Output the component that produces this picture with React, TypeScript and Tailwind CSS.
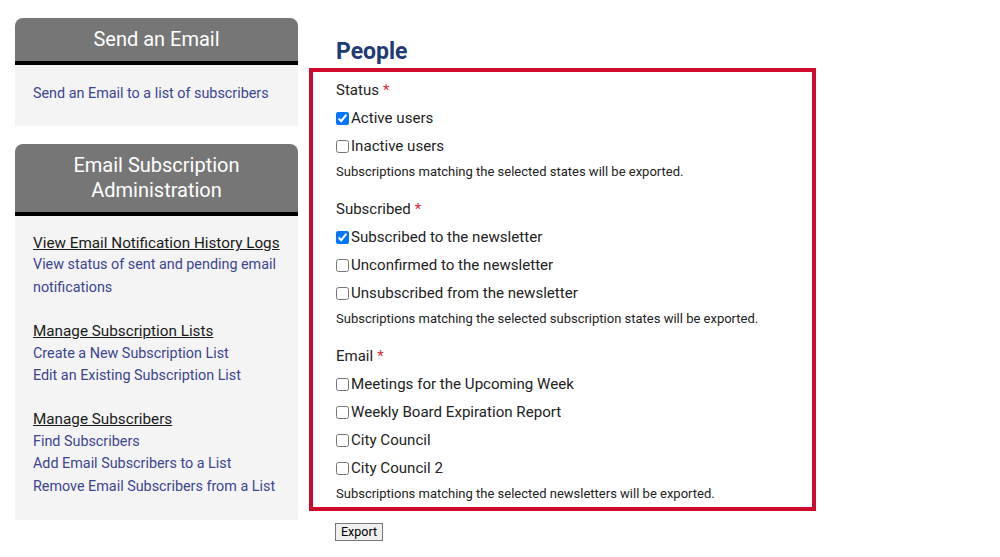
import React from 'react';

const linkBlue = 'text-[#3b4590]';

const SideCard = ({ title, children, className = '' }: { title: React.ReactNode; children: React.ReactNode; className?: string }) => (
  <div className={`w-[283px] ${className}`}>
    <div className="rounded-t-[8px] border-b-4 border-black bg-[#767676] text-center text-[20px] leading-[25px] text-white">
      {title}
    </div>
    <div className="bg-[#f4f4f4] px-[18px]">{children}</div>
  </div>
);

const Check = ({ label, checked = false }: { label: string; checked?: boolean }) => (
  <label className="flex h-[28px] items-center text-[15.1px] text-[#222]">
    <input type="checkbox" defaultChecked={checked} className="m-0 mr-[2px] h-[13px] w-[13px] accent-[#0075ff]" />
    {label}
  </label>
);

const Group = ({ title, items, help, last = false }: { title: string; items: [string, boolean][]; help: string; last?: boolean }) => (
  <div className={last ? '' : 'mb-[11px]'}>
    <div className="flex h-[28px] items-center text-[15px] text-[#222]">
      {title}
      <span className="ml-[4px] text-[#e0283c]">*</span>
    </div>
    {items.map(([l, c]) => (
      <Check key={l} label={l} checked={c} />
    ))}
    <div className="flex h-[24px] items-center text-[13px] text-[#222]">{help}</div>
  </div>
);

export default function App() {
  return (
    <div className="flex min-h-[557px] bg-white pl-[15px] pt-[18px] font-['Roboto',sans-serif]">
      <div className="flex flex-col gap-[18px]">
        <SideCard title={<div className="flex h-[43px] items-center justify-center">Send an Email</div>}>
          <div className={`pb-[21px] pt-[18px] text-[14.35px] leading-[22px] ${linkBlue}`}>Send an Email to a list of subscribers</div>
        </SideCard>
        <SideCard
          title={
            <div className="py-[9px]">
              Email Subscription
              <br />
              Administration
            </div>
          }
        >
          <div className="pb-[22px] pt-[16px] text-[14.35px] leading-[22.4px]">
            <div className="mb-[21px]">
              <div className="text-[15.25px] text-[#1a1a1a] underline">View Email Notification History Logs</div>
              <div className={linkBlue}>View status of sent and pending email notifications</div>
            </div>
            <div className="mb-[21px]">
              <div className="text-[15.25px] text-[#1a1a1a] underline">Manage Subscription Lists</div>
              <div className={linkBlue}>Create a New Subscription List</div>
              <div className={linkBlue}>Edit an Existing Subscription List</div>
            </div>
            <div>
              <div className="text-[15.25px] text-[#1a1a1a] underline">Manage Subscribers</div>
              <div className={linkBlue}>Find Subscribers</div>
              <div className={linkBlue}>Add Email Subscribers to a List</div>
              <div className={linkBlue}>Remove Email Subscribers from a List</div>
            </div>
          </div>
        </SideCard>
      </div>

      <div className="ml-[11px] w-[507px]">
        <h1 className="mb-[2px] mt-[20px] pl-[27px] text-[23px] font-bold leading-[28px] text-[#1f3b73]">People</h1>
        <div className="border-4 border-[#cf0a2c] pb-[1px] pl-[23px] pt-[4px]">
          <Group
            title="Status"
            items={[
              ['Active users', true],
              ['Inactive users', false],
            ]}
            help="Subscriptions matching the selected states will be exported."
          />
          <Group
            title="Subscribed"
            items={[
              ['Subscribed to the newsletter', true],
              ['Unconfirmed to the newsletter', false],
              ['Unsubscribed from the newsletter', false],
            ]}
            help="Subscriptions matching the selected subscription states will be exported."
          />
          <Group
            title="Email"
            items={[
              ['Meetings for the Upcoming Week', false],
              ['Weekly Board Expiration Report', false],
              ['City Council', false],
              ['City Council 2', false],
            ]}
            help="Subscriptions matching the selected newsletters will be exported."
            last
          />
        </div>
        <button className="ml-[26px] mt-[12px] h-[18px] border border-[#767676] bg-[#efefef] px-[5px] text-[12.5px] leading-[14px] text-black">
          Export
        </button>
      </div>
    </div>
  );
}
